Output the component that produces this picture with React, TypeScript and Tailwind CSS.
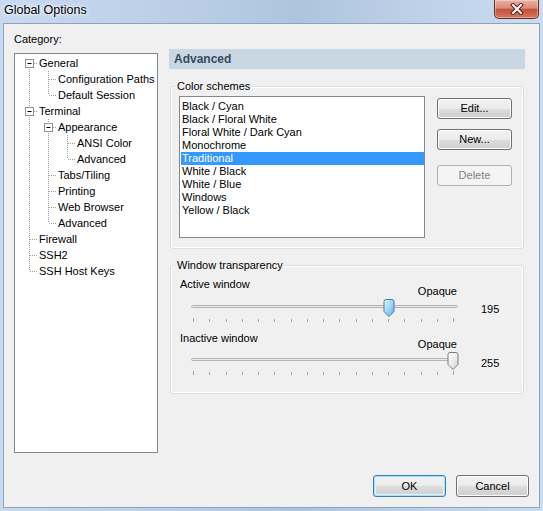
import React from "react";

type TreeRow = {
  label: string;
  anc: boolean[];
  up: boolean;
  down: boolean;
  box?: boolean;
};

const tree: TreeRow[] = [
  { label: "General", anc: [], up: false, down: true, box: true },
  { label: "Configuration Paths", anc: [true], up: true, down: true },
  { label: "Default Session", anc: [true], up: true, down: false },
  { label: "Terminal", anc: [], up: true, down: true, box: true },
  { label: "Appearance", anc: [true], up: true, down: true, box: true },
  { label: "ANSI Color", anc: [true, true], up: true, down: true },
  { label: "Advanced", anc: [true, true], up: true, down: false },
  { label: "Tabs/Tiling", anc: [true], up: true, down: true },
  { label: "Printing", anc: [true], up: true, down: true },
  { label: "Web Browser", anc: [true], up: true, down: true },
  { label: "Advanced", anc: [true], up: true, down: false },
  { label: "Firewall", anc: [], up: true, down: true },
  { label: "SSH2", anc: [], up: true, down: true },
  { label: "SSH Host Keys", anc: [], up: true, down: false },
];

const schemes = [
  "Black / Cyan",
  "Black / Floral White",
  "Floral White / Dark Cyan",
  "Monochrome",
  "Traditional",
  "White / Black",
  "White / Blue",
  "Windows",
  "Yellow / Black",
];

const dot = { stroke: "#a0a0a0", strokeDasharray: "1 1" };

// one 19px column of tree lines
function Cell({ up, down, right, box }: { up?: boolean; down?: boolean; right?: boolean; box?: boolean }) {
  return (
    <svg width="19" height="16" className="block shrink-0">
      {up && <line x1="10.5" y1="0" x2="10.5" y2="8" {...dot} />}
      {down && <line x1="10.5" y1="8" x2="10.5" y2="16" {...dot} />}
      {right && <line x1="11" y1="8.5" x2="19" y2="8.5" {...dot} />}
      {box && (
        <>
          <rect x="6.5" y="4.5" width="8" height="8" fill="#fff" stroke="#919191" />
          <line x1="8.5" y1="8.5" x2="12.5" y2="8.5" stroke="#000" />
        </>
      )}
    </svg>
  );
}

function Slider({ pos, active }: { pos: number; active: boolean }) {
  const ticks = Array.from({ length: 17 }, (_, i) => Math.round(6 + i * 16.25));
  const id = active ? "thumbA" : "thumbB";
  return (
    <svg width="275" height="27" className="block shrink-0">
      <defs>
        <linearGradient id={id} x1="0" y1="0" x2="1" y2="1">
          {active ? (
            <>
              <stop offset="0" stopColor="#e4f5fd" />
              <stop offset="0.5" stopColor="#9fd6f4" />
              <stop offset="1" stopColor="#5bb1e4" />
            </>
          ) : (
            <>
              <stop offset="0" stopColor="#ffffff" />
              <stop offset="0.5" stopColor="#ececec" />
              <stop offset="1" stopColor="#d2d2d2" />
            </>
          )}
        </linearGradient>
      </defs>
      <rect x="4.5" y="7.5" width="266" height="2" rx="1" fill="#e7eaea" stroke="#b4b4b4" />
      {ticks.map((t, i) => (
        <line
          key={i}
          x1={t + 0.5}
          y1={i === 0 || i === 16 ? 20 : 21}
          x2={t + 0.5}
          y2={24}
          stroke="#a4a4a4"
        />
      ))}
      <g transform={`translate(${pos - 5.5} 1)`}>
        <path
          d="M0.5 2.5 Q0.5 0.5 2.5 0.5 H8.5 Q10.5 0.5 10.5 2.5 V12.5 L5.5 17.5 L0.5 12.5 Z"
          fill={`url(#${id})`}
          stroke={active ? "#3c7fb1" : "#7a7a7a"}
        />
      </g>
    </svg>
  );
}

function Btn({
  children,
  kind = "normal",
  className = "",
}: {
  children: React.ReactNode;
  kind?: "normal" | "default" | "disabled";
  className?: string;
}) {
  const look =
    kind === "disabled"
      ? "border-[#adb2b5] bg-[#f4f4f4] text-[#838383]"
      : kind === "default"
      ? "border-[#3c7fb1] bg-[linear-gradient(180deg,#f2f2f2_0%,#ebebeb_50%,#dddddd_50%,#cfcfcf_100%)] shadow-[inset_0_0_0_1px_#a9dcf6,inset_0_0_0_2px_#e3f4fc]"
      : "border-[#707070] bg-[linear-gradient(180deg,#f2f2f2_0%,#ebebeb_50%,#dddddd_50%,#cfcfcf_100%)] shadow-[inset_0_0_0_1px_#fcfcfc]";
  return (
    <div className={`flex items-center justify-center rounded-[3px] border ${look} ${className}`}>
      {children}
    </div>
  );
}

export default function App() {
  return (
    <div className="w-[543px] h-[511px] flex flex-col px-[3px] pb-[3px] bg-[linear-gradient(90deg,#c7daef_0%,#b9cde6_35%,#aec4de_55%,#bfd2e9_80%,#cadcf0_100%)] font-['Liberation_Sans',Arial,sans-serif] text-[11px] leading-[13px] text-black">
      {/* Title bar */}
      <div className="h-[23px] flex items-start justify-between shrink-0">
        <div className="ml-[1px] mt-[3px] text-[12.5px] leading-[15px] [text-shadow:0_0_6px_#fff,0_0_3px_#fff]">
          Global Options
        </div>
        <div className="mr-[1px] w-[45px] h-[19px] rounded-b-[5px] border border-t-0 border-[#6b2b25] bg-[linear-gradient(180deg,#eab1a4_0%,#dc8a79_45%,#c6503b_52%,#d5775f_100%)] shadow-[inset_0_0_0_1px_rgba(255,255,255,0.35)] flex items-center justify-center">
          <svg width="14" height="12" viewBox="0 0 14 12">
            <path d="M3 2 L11 10 M11 2 L3 10" stroke="#5a211c" strokeWidth="4" strokeLinecap="square" />
            <path d="M3 2 L11 10 M11 2 L3 10" stroke="#ffffff" strokeWidth="2" strokeLinecap="square" />
          </svg>
        </div>
      </div>

      {/* Client area */}
      <div className="flex-1 flex flex-col border border-[#8da2bc] bg-[#f0f0f0]">
        <div className="flex">
          {/* Category tree */}
          <div className="ml-[10px] pt-[9px] w-[144px] flex flex-col">
            <div>Category:</div>
            <div className="mt-[7px] h-[400px] border border-[#828790] bg-white pl-[4px] pt-[1px]">
              {tree.map((r, i) => (
                <div key={i} className="flex h-[16px] items-center">
                  {r.anc.map((a, j) => (
                    <Cell key={j} up={a} down={a} />
                  ))}
                  <Cell up={r.up} down={r.down} right box={r.box} />
                  <span className="ml-[1px] leading-[16px] whitespace-nowrap">{r.label}</span>
                </div>
              ))}
            </div>
          </div>

          {/* Right page */}
          <div className="ml-[11px] pt-[25px] flex flex-col">
            <div className="w-[356px] h-[20px] bg-[#c9d6e4] flex items-center pl-[5px] text-[12px] font-bold text-[#3a4a5b]">
              Advanced
            </div>

            <fieldset className="mt-[11px] ml-[1px] w-[354px] border border-[#d5dfe5] rounded-[3px] shadow-[inset_0_0_0_1px_#fff] pl-[8px] pr-[11px] pb-[10px]">
              <legend className="-ml-[4px] px-[2px] bg-[#f0f0f0]">Color schemes</legend>
              <div className="flex mt-[3px]">
                <div className="w-[246px] h-[142px] border border-[#828790] bg-white pl-[1px] pt-[3px]">
                  {schemes.map((s) => (
                    <div
                      key={s}
                      className={`h-[13px] pl-[1px] whitespace-nowrap ${
                        s === "Traditional" ? "bg-[#3399ff] text-white" : ""
                      }`}
                    >
                      {s}
                    </div>
                  ))}
                </div>
                <div className="ml-[12px] mt-[2px] flex flex-col">
                  <Btn className="w-[75px] h-[21px]">Edit...</Btn>
                  <Btn className="w-[75px] h-[21px] mt-[10px]">New...</Btn>
                  <Btn kind="disabled" className="w-[75px] h-[21px] mt-[15px]">Delete</Btn>
                </div>
              </div>
            </fieldset>

            <fieldset className="mt-[10px] ml-[1px] w-[354px] border border-[#d5dfe5] rounded-[3px] shadow-[inset_0_0_0_1px_#fff] pl-[9px] pb-[15px]">
              <legend className="-ml-[5px] px-[2px] bg-[#f0f0f0]">Window transparency</legend>
              <div className="mt-[6px] w-[277px] flex justify-between">
                <span>Active window</span>
                <span className="mt-[7px]">Opaque</span>
              </div>
              <div className="ml-[7px] flex items-start">
                <Slider pos={202} active />
                <span className="ml-[19px] mt-[5px]">195</span>
              </div>
              <div className="mt-[7px] w-[277px] flex justify-between">
                <span>Inactive window</span>
                <span className="mt-[6px]">Opaque</span>
              </div>
              <div className="ml-[7px] flex items-start">
                <Slider pos={266} active={false} />
                <span className="ml-[19px] mt-[6px]">255</span>
              </div>
            </fieldset>
          </div>
        </div>

        <div className="mt-auto flex justify-end gap-[10px] pr-[10px] pb-[10px]">
          <Btn kind="default" className="w-[73px] h-[22px]">OK</Btn>
          <Btn className="w-[73px] h-[22px]">Cancel</Btn>
        </div>
      </div>
    </div>
  );
}
